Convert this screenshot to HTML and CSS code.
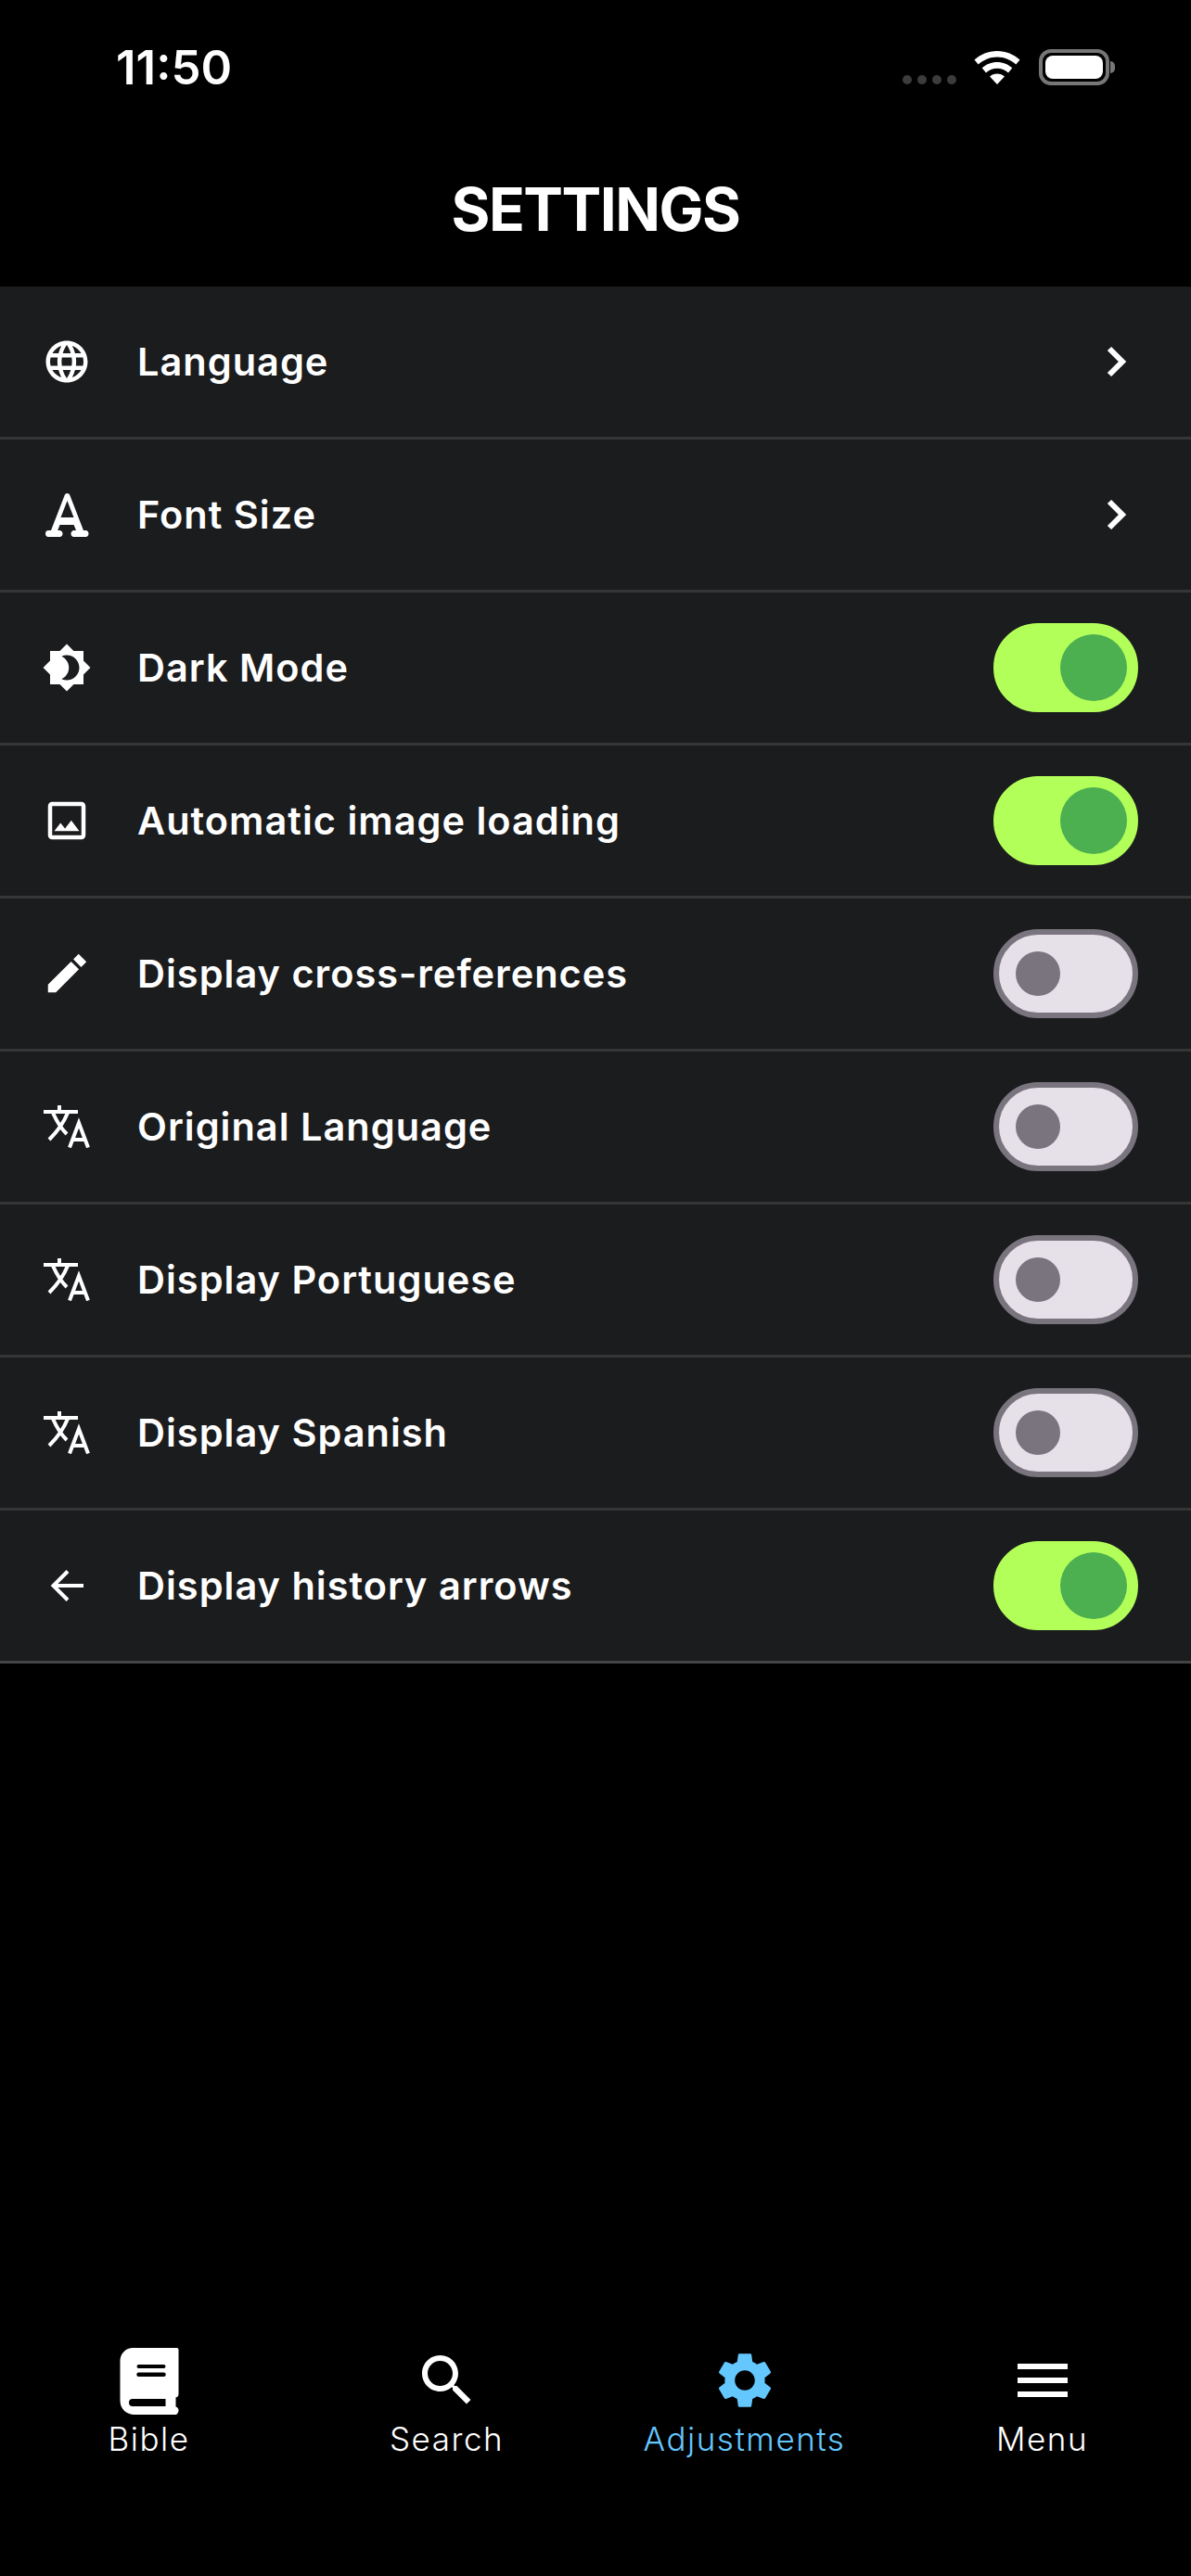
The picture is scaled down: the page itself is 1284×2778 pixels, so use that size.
FILE: index.html
```html
<!DOCTYPE html>
<html>
<head>
  <title>Settings</title>
  <link rel="stylesheet" href="styles.css">
</head>
<body>
  <div class="screen">
    <div class="status-bar">
      <span class="time">11:50</span>
      <div class="status-icons">
        <div class="signal"><i></i><i></i><i></i><i></i></div>
        <svg class="wifi" viewBox="0 0 50 36"><path fill="#fff" d="M25 0C15.5 0 7 3.7.5 9.6l4.2 5C10 9.7 17.1 6.5 25 6.5s15 3.2 20.3 8.1l4.2-5C43 3.7 34.5 0 25 0zM25 12c-6.3 0-12 2.4-16.3 6.3l4.3 5.1c3.1-2.9 7.4-4.7 12-4.7s8.9 1.8 12 4.7l4.300-5.100C37 14.4 31.3 12 25 12zM25 24.500c-3.100 0-5.900 1.200-8 3.100L25 36l8-8.400c-2.100-1.900-4.900-3.100-8-3.100z"/></svg>
        <div class="battery"><div class="battery-fill"></div></div>
        <div class="battery-cap"></div>
      </div>
    </div>

    <h1 class="title">SETTINGS</h1>

    <div class="list">
      <div class="row">
        <svg class="row-icon" viewBox="0 0 24 24"><path d="M12 2C6.48 2 2 6.48 2 12s4.48 10 10 10 10-4.48 10-10S17.52 2 12 2zm6.93 6h-2.95c-.32-1.25-.78-2.45-1.38-3.56 1.84.63 3.37 1.91 4.33 3.56zM12 4.04c.83 1.2 1.48 2.53 1.91 3.96h-3.82c.43-1.43 1.08-2.76 1.91-3.96zM4.26 14C4.1 13.36 4 12.69 4 12s.1-1.36.26-2h3.38c-.08.66-.14 1.32-.14 2s.06 1.34.14 2H4.26zm.82 2h2.95c.32 1.25.78 2.45 1.38 3.56-1.84-.63-3.37-1.9-4.33-3.56zm2.95-8H5.08c.96-1.66 2.49-2.93 4.33-3.56C8.81 5.55 8.35 6.75 8.03 8zM12 19.96c-.83-1.2-1.48-2.53-1.91-3.96h3.82c-.43 1.43-1.08 2.76-1.91 3.96zM14.34 14H9.66c-.09-.66-.16-1.32-.16-2s.07-1.35.16-2h4.68c.09.65.16 1.32.16 2s-.07 1.34-.16 2zm.25 5.56c.6-1.11 1.06-2.31 1.38-3.56h2.95c-.96 1.65-2.49 2.93-4.33 3.56zM16.36 14c.08-.66.14-1.32.14-2s-.06-1.34-.14-2h3.38c.16.64.26 1.31.26 2s-.1 1.36-.26 2h-3.38z"/></svg>
        <span class="row-label">Language</span>
        <svg class="chevron" viewBox="0 0 30 40"><path d="M6 6l14 14L6 34" fill="none" stroke="#fff" stroke-width="6"/></svg>
      </div>
      <div class="row">
        <svg class="row-icon" viewBox="0 0 54 54"><path fill-rule="evenodd" d="M27.5 4c1.2 0 2.200.7 2.700 1.800L45 44h2.500c1.700 0 3 1.500 3 3.500s-1.300 3.500-3 3.500H34.500c-1.700 0-3-1.500-3-3.500 0-1.800 1.200-3.200 2.700-3.500H37l-2.400-6H19.500l-2.300 6h2.600c1.500.3 2.700 1.700 2.700 3.500 0 2-1.300 3.500-3 3.500H7c-1.700 0-3-1.500-3-3.500s1.300-3.500 3-3.500h3L24.800 5.800c.5-1.100 1.500-1.800 2.700-1.800zM27.500 12l-7 18h14z"/></svg>
        <span class="row-label">Font Size</span>
        <svg class="chevron" viewBox="0 0 30 40"><path d="M6 6l14 14L6 34" fill="none" stroke="#fff" stroke-width="6"/></svg>
      </div>
      <div class="row">
        <svg class="row-icon" viewBox="0 0 24 24"><path d="M20 8.69V4h-4.69L12 .69 8.69 4H4v4.69L.69 12 4 15.31V20h4.69L12 23.31 15.31 20H20v-4.69L23.31 12 20 8.69zM12 18c-.89 0-1.74-.2-2.5-.55C11.56 16.5 13 14.42 13 12s-1.44-4.5-3.5-5.45C10.26 6.2 11.11 6 12 6c3.31 0 6 2.69 6 6s-2.69 6-6 6z"/></svg>
        <span class="row-label">Dark Mode</span>
        <div class="switch on"><div class="knob"></div></div>
      </div>
      <div class="row">
        <svg class="row-icon" viewBox="0 0 24 24"><path d="M19 5v14H5V5h14m0-2H5c-1.1 0-2 .9-2 2v14c0 1.1.9 2 2 2h14c1.1 0 2-.9 2-2V5c0-1.1-.9-2-2-2zm-4.86 8.86l-3 3.87L9 13.14 6 17h12l-3.86-5.14z"/></svg>
        <span class="row-label">Automatic image loading</span>
        <div class="switch on"><div class="knob"></div></div>
      </div>
      <div class="row">
        <svg class="row-icon" viewBox="0 0 24 24"><path d="M3 17.25V21h3.75L17.81 9.94l-3.75-3.75L3 17.25zM21.41 6.34l-3.75-3.75-2.53 2.54 3.75 3.75 2.53-2.54z"/></svg>
        <span class="row-label">Display cross-references</span>
        <div class="switch"><div class="knob"></div></div>
      </div>
      <div class="row">
        <svg class="row-icon translate" viewBox="0 0 50 46"><path class="stroke" d="M0 7h37M17 0v7M26 8C22 18 15 28 6 37M10 8c4 9 9 17 15 23M28 45.500L38 19l10 26.500M31 37h14"/></svg>
        <span class="row-label">Original Language</span>
        <div class="switch"><div class="knob"></div></div>
      </div>
      <div class="row">
        <svg class="row-icon translate" viewBox="0 0 50 46"><path class="stroke" d="M0 7h37M17 0v7M26 8C22 18 15 28 6 37M10 8c4 9 9 17 15 23M28 45.500L38 19l10 26.500M31 37h14"/></svg>
        <span class="row-label">Display Portuguese</span>
        <div class="switch"><div class="knob"></div></div>
      </div>
      <div class="row">
        <svg class="row-icon translate" viewBox="0 0 50 46"><path class="stroke" d="M0 7h37M17 0v7M26 8C22 18 15 28 6 37M10 8c4 9 9 17 15 23M28 45.500L38 19l10 26.500M31 37h14"/></svg>
        <span class="row-label">Display Spanish</span>
        <div class="switch"><div class="knob"></div></div>
      </div>
      <div class="row">
        <svg class="row-icon" viewBox="0 0 54 54"><path class="stroke" d="M12 27h33M28 11.500L12.500 27 28 42.500"/></svg>
        <span class="row-label">Display history arrows</span>
        <div class="switch on"><div class="knob"></div></div>
      </div>
    </div>

    <div class="tab-bar">
      <div class="tab">
        <svg class="tab-icon" viewBox="0 0 72 72"><path fill-rule="evenodd" d="M18 1H65.500c1.200 0 2 .8 2 2V51c0 1.500-1 3-3 3.500V64.500c2 .5 3 2 3 4s-1.500 4.500-3 4.500H20C11 73 4.500 66.500 4.500 58V15C4.500 7 11 1 18 1zM24.500 19h27a2 2 0 0 1 0 4h-27a2 2 0 0 1 0-4zM24.500 27.500h27a2.250 2.250 0 0 1 0 4.500h-27a2.250 2.250 0 0 1 0-4.500zM18 56h35.500v8H18a4 4 0 0 1 0-8z"/></svg>
        <span class="tab-label">Bible</span>
      </div>
      <div class="tab">
        <svg class="tab-icon" viewBox="0 0 24 24"><path d="M15.5 14h-.79l-.28-.27C15.41 12.59 16 11.11 16 9.5 16 5.91 13.09 3 9.5 3S3 5.91 3 9.5 5.91 16 9.5 16c1.61 0 3.09-.59 4.23-1.57l.27.28v.79l5 4.99L20.49 19l-4.99-5zm-6 0C7.01 14 5 11.99 5 9.5S7.01 5 9.5 5 14 7.01 14 9.5 11.99 14 9.5 14z"/></svg>
        <span class="tab-label">Search</span>
      </div>
      <div class="tab active">
        <svg class="tab-icon" viewBox="0 0 24 24"><path d="M19.14 12.94c.04-.3.06-.61.06-.94 0-.32-.02-.64-.07-.94l2.03-1.58c.18-.14.23-.41.12-.61l-1.92-3.32c-.12-.22-.37-.29-.59-.22l-2.39.96c-.5-.38-1.03-.7-1.62-.94l-.36-2.54c-.04-.24-.24-.41-.48-.41h-3.84c-.24 0-.43.17-.47.41l-.36 2.54c-.59.24-1.13.57-1.62.94l-2.39-.96c-.22-.08-.47 0-.59.22L2.74 8.87c-.12.21-.08.47.12.61l2.03 1.58c-.05.3-.09.63-.09.94s.02.64.07.94l-2.03 1.58c-.18.14-.23.41-.12.61l1.92 3.32c.12.22.37.29.59.22l2.39-.96c.5.38 1.03.7 1.62.94l.36 2.54c.05.24.24.41.48.41h3.84c.24 0 .44-.17.47-.41l.36-2.54c.59-.24 1.13-.56 1.62-.94l2.39.96c.22.08.47 0 .59-.22l1.92-3.32c.12-.22.07-.47-.12-.61l-2.01-1.58zM12 15.6c-1.98 0-3.6-1.62-3.6-3.6s1.62-3.6 3.6-3.6 3.6 1.62 3.6 3.6-1.62 3.6-3.6 3.6z"/></svg>
        <span class="tab-label">Adjustments</span>
      </div>
      <div class="tab">
        <svg class="tab-icon" viewBox="0 0 24 24"><path d="M3 18h18v-2H3v2zm0-5h18v-2H3v2zm0-7v2h18V6H3z"/></svg>
        <span class="tab-label">Menu</span>
      </div>
    </div>
  </div>
</body>
</html>
```

FILE: styles.css
```css
* {
  box-sizing: border-box;
}

body {
  margin: 0;
  background-color: #000;
  color: #fff;
  font-family: Inter, "Liberation Sans", sans-serif;
}

.screen {
  width: 1284px;
  height: 2778px;
  display: flex;
  flex-direction: column;
}

/* Status bar */
.status-bar {
  height: 152px;
  display: flex;
  justify-content: space-between;
  align-items: flex-start;
  padding: 43px 82px 0 125px;
}

.time {
  font-size: 51px;
  font-weight: 600;
  line-height: 60px;
}

.status-icons {
  display: flex;
  align-items: flex-end;
  height: 39px;
  margin-top: 10px;
}

.signal {
  display: flex;
  gap: 6px;
  margin-right: 19px;
  margin-bottom: 1px;
}

.signal i {
  width: 10px;
  height: 10px;
  border-radius: 50%;
  background-color: #3c3c3c;
}

.wifi {
  width: 50px;
  height: 36px;
  margin-right: 20px;
  margin-bottom: 1px;
}

.battery {
  width: 76px;
  height: 39px;
  padding: 3px;
  border: 4px solid #767676;
  border-radius: 13px;
}

.battery-fill {
  height: 100%;
  border-radius: 8px;
  background-color: #fff;
}

.battery-cap {
  width: 5px;
  height: 13px;
  margin: 0 0 13px 1px;
  border-radius: 0 5px 5px 0;
  background-color: #767676;
}

/* Header */
.title {
  margin: 0;
  height: 157px;
  text-align: center;
  font-size: 64px;
  font-weight: 700;
  line-height: 148px;
  letter-spacing: -1.5px;
}

/* Settings rows */
.list {
  display: flex;
  flex-direction: column;
}

.row {
  height: 165px;
  display: flex;
  align-items: center;
  padding: 0 57px 0 45px;
  background-color: #1b1c1e;
  border-bottom: 3px solid #363636;
}

.row:last-child {
  border-bottom-color: #444;
}

.row-icon {
  width: 54px;
  height: 54px;
  margin-right: 49px;
  fill: #fff;
}

.row-icon.translate {
  width: 50px;
  height: 46px;
  margin: 0 51px 0 2px;
}

.stroke {
  fill: none;
  stroke: #fff;
  stroke-width: 4;
}

.row-label {
  flex: 1;
  font-size: 41.5px;
  font-weight: 600;
  letter-spacing: 1px;
}

.chevron {
  width: 30px;
  height: 40px;
  margin-right: 7px;
}

.switch {
  width: 156px;
  height: 96px;
  display: flex;
  align-items: center;
  padding-left: 18px;
  border: 6px solid #79747e;
  border-radius: 48px;
  background-color: #e6e0e9;
}

.knob {
  width: 48px;
  height: 48px;
  border-radius: 50%;
  background-color: #79747e;
}

.switch.on {
  justify-content: flex-end;
  padding: 0 6px 0 0;
  border-color: #b2ff59;
  background-color: #b2ff59;
}

.switch.on .knob {
  width: 72px;
  height: 72px;
  background-color: #4caf50;
}

/* Bottom tabs */
.tab-bar {
  margin-top: auto;
  margin-bottom: 127px;
  display: grid;
  grid-template-columns: repeat(4, 321px);
}

.tab {
  display: flex;
  flex-direction: column;
  align-items: center;
}

.tab-icon {
  width: 72px;
  height: 72px;
  fill: #fff;
  overflow: visible;
}

.tab-label {
  margin-top: 6px;
  font-size: 35px;
  font-weight: 300;
  line-height: 42px;
  letter-spacing: 1.5px;
}

.tab.active .tab-icon {
  fill: #64c8ff;
}

.tab.active .tab-label {
  color: #64c8ff;
}
```
